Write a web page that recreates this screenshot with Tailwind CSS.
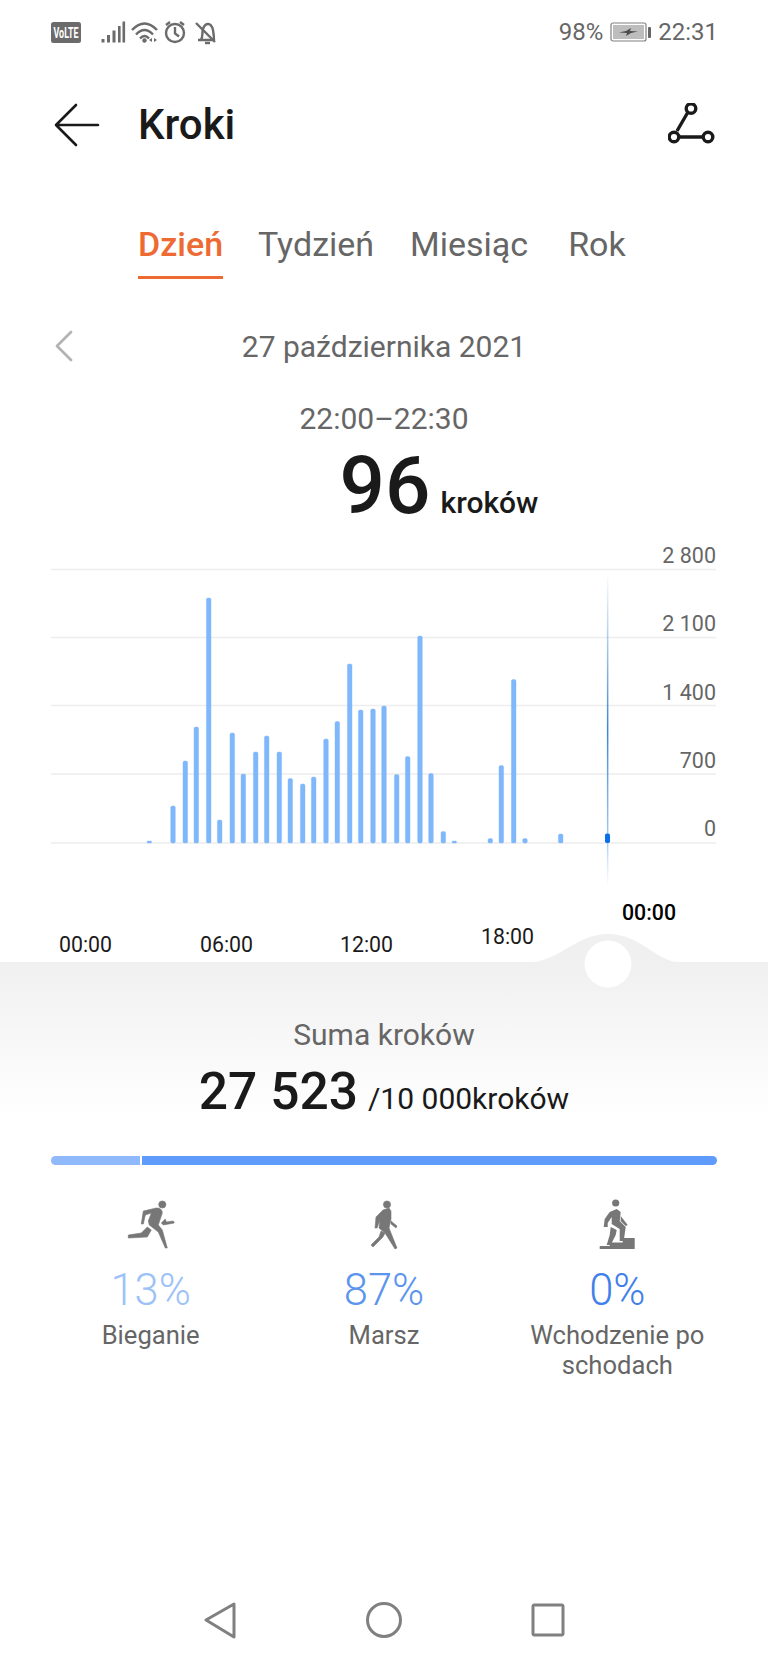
<!DOCTYPE html>
<html lang="pl">
<head>
<meta charset="utf-8">
<script src="https://cdn.jsdelivr.net/npm/@tailwindcss/browser@4"></script>
<title>Kroki</title>
</head>
<body class="bg-white">
<div class="w-[768px] h-[1664px] overflow-hidden bg-white flex flex-col font-['Roboto',sans-serif] text-[#1a1a1a]">

  <!-- status bar -->
  <div class="h-[64px] shrink-0 pl-[50px] pr-[50px] flex items-center justify-between text-[#666666] text-[24px]">
    <div class="flex items-center">
      <svg width="168" height="26" viewBox="50 19 168 26" class="block">
        <rect x="51" y="22" width="30" height="21" rx="2.500" fill="#6b6b6b"/>
        <text x="53.500" y="37.500" font-size="14" font-weight="700" fill="#fff" textLength="25" lengthAdjust="spacingAndGlyphs">VoLTE</text>
        <g fill="#6b6b6b">
          <rect x="101.500" y="39" width="3" height="3.500"/><rect x="107" y="35" width="3" height="7.500"/><rect x="112.500" y="30.500" width="3" height="12"/><rect x="118" y="26" width="2.600" height="16.500"/><rect x="122.500" y="21.500" width="2.600" height="21"/>
        </g>
        <g fill="none" stroke="#6b6b6b" stroke-width="2.400">
          <path d="M132 30 Q144.500 17 157 30"/><path d="M136 34.500 Q144.500 25.500 153 34.500"/><path d="M140 38.500 Q144.500 33.500 149 38.500"/>
          <circle cx="175" cy="33" r="9"/><path d="M175 27v6.500l4 3"/><path d="M166 25l4-3M184 25l-4-3"/>
          <path d="M198 40h16M201 40c2-3 1-8 2-11 1-3 3-5 5-5s4 2 5 6c.5 3 1 7 1 10"/><path d="M196 23l19 19"/><path d="M205 43h5"/>
        </g>
        <circle cx="144.500" cy="40.500" r="2.200" fill="#6b6b6b"/>
        <path d="M149 40l3-2v4zM157 40l-3-2v4z" fill="#6b6b6b"/>
      </svg>
    </div>
    <div class="flex items-center gap-[7px]">
      <span>98%</span>
      <svg width="41" height="22" viewBox="0 0 41 22" class="block">
        <rect x="1" y="2" width="35" height="18" rx="2" fill="#fff" stroke="#808080" stroke-width="1.200"/>
        <rect x="3" y="4" width="31" height="14" fill="#bdbdbd"/>
        <rect x="38" y="6" width="3" height="11" rx="1" fill="#666"/>
        <path d="M9 11.500l7-1.500 5-3-1 3 8 .5-7 1.500-5 3 1-3z" fill="#4d4d4d"/>
      </svg>
      <span>22:31</span>
    </div>
  </div>

  <!-- header -->
  <div class="h-[122px] shrink-0 pl-[54px] pr-[52px] flex items-center justify-between">
    <div class="flex items-center gap-[38px]">
      <svg width="46" height="44" viewBox="0 0 46 44" class="block" fill="none" stroke="#1a1a1a" stroke-width="2.600" stroke-linecap="round" stroke-linejoin="round">
        <path d="M44 22H2M22 2L2 22l20 20"/>
      </svg>
      <h1 class="text-[42px] leading-none font-medium">Kroki</h1>
    </div>
    <svg width="48" height="44" viewBox="0 0 48 44" class="block" fill="none" stroke="#1a1a1a" stroke-width="3.400">
      <path d="M20 9L9 28M11 34h24"/>
      <circle cx="23" cy="5.500" r="4.800"/><circle cx="6" cy="34" r="4.800"/><circle cx="40" cy="34" r="4.800"/>
    </svg>
  </div>

  <!-- tabs -->
  <div class="h-[93px] shrink-0 pl-[138px] pt-[38px] flex items-start text-[34px] leading-[40px] text-[#666666]">
    <div class="w-[85px] h-[55px] border-b-[3px] border-[#ed6b33] text-[#ed6b33] font-medium whitespace-nowrap">Dzień</div>
    <div class="ml-[35px]">Tydzień</div>
    <div class="ml-[36px]">Miesiąc</div>
    <div class="ml-[40px]">Rok</div>
  </div>

  <!-- date -->
  <div class="mt-[39px] h-[56px] shrink-0 relative flex items-center justify-center text-[30px] text-[#666666]">
    <svg width="20" height="32" viewBox="0 0 20 32" class="absolute left-[54px] top-[12px]" fill="none" stroke="#b3b3b3" stroke-width="2.800" stroke-linecap="round" stroke-linejoin="round"><path d="M17 2L3 16l14 14"/></svg>
    <span>27 października 2021</span>
  </div>

  <div class="mt-[16px] h-[44px] shrink-0 pt-[12px] flex items-center justify-center text-[30px] text-[#666666]">22:00–22:30</div>
  <div class="mt-[20px] h-[64px] shrink-0 pl-[110px] flex items-baseline justify-center">
    <span class="text-[80px] leading-[64px] font-medium">96</span>
    <span class="ml-[10px] text-[30px] font-medium">kroków</span>
  </div>

  <!-- chart -->
  <svg width="768" height="423" viewBox="0 539 768 423" class="mt-[21px] block overflow-visible relative z-10 shrink-0">
    <defs>
      <linearGradient id="mark" gradientUnits="userSpaceOnUse" x1="0" y1="572" x2="0" y2="888">
        <stop offset="0" stop-color="#3b85d0" stop-opacity="0"/>
        <stop offset=".5" stop-color="#3b85d0"/>
        <stop offset=".85" stop-color="#8cbcf0" stop-opacity=".8"/>
        <stop offset="1" stop-color="#b8d6f5" stop-opacity="0"/>
      </linearGradient>
    </defs>
    <g stroke="#ededed" stroke-width="1.300">
      <path d="M51 569.500H716M51 637.500H716M51 705.500H716M51 774H716M51 843H716"/>
    </g>
    <g fill="#666666" font-size="21.500" text-anchor="end">
      <text x="716" y="563">2 800</text>
      <text x="716" y="631">2 100</text>
      <text x="716" y="700">1 400</text>
      <text x="716" y="768">700</text>
      <text x="716" y="836">0</text>
    </g>
    <g fill="#7fb7fb" stroke="#7fb7fb" stroke-width=".4">
      <rect x="147" y="841" width="4.600" height="2" rx="1"/>
      <rect x="170.700" y="806" width="4.600" height="37" rx="1.500"/>
      <rect x="183" y="761" width="4.600" height="82" rx="1.500"/>
      <rect x="194" y="727" width="4.600" height="116" rx="1.500"/>
      <rect x="206.400" y="598" width="4.600" height="245" rx="1.500"/>
      <rect x="217.400" y="820" width="4.600" height="23" rx="1.500"/>
      <rect x="230" y="733" width="4.600" height="110" rx="1.500"/>
      <rect x="241" y="774" width="4.600" height="69" rx="1.500"/>
      <rect x="253.400" y="752" width="4.600" height="91" rx="1.500"/>
      <rect x="264.400" y="736" width="4.600" height="107" rx="1.500"/>
      <rect x="277" y="752" width="4.600" height="91" rx="1.500"/>
      <rect x="288" y="778.500" width="4.600" height="64.500" rx="1.500"/>
      <rect x="300.400" y="784" width="4.600" height="59" rx="1.500"/>
      <rect x="311.400" y="777" width="4.600" height="66" rx="1.500"/>
      <rect x="323.700" y="739" width="4.600" height="104" rx="1.500"/>
      <rect x="335" y="721.500" width="4.600" height="121.500" rx="1.500"/>
      <rect x="347.400" y="664" width="4.600" height="179" rx="1.500"/>
      <rect x="358.400" y="710" width="4.600" height="133" rx="1.500"/>
      <rect x="370.700" y="709" width="4.600" height="134" rx="1.500"/>
      <rect x="381.700" y="706" width="4.600" height="137" rx="1.500"/>
      <rect x="394.400" y="774.500" width="4.600" height="68.500" rx="1.500"/>
      <rect x="405.400" y="756.500" width="4.600" height="86.500" rx="1.500"/>
      <rect x="417.700" y="636" width="4.600" height="207" rx="1.500"/>
      <rect x="428.700" y="773.500" width="4.600" height="69.500" rx="1.500"/>
      <rect x="441" y="831.500" width="4.600" height="11.500" rx="1.500"/>
      <rect x="452" y="841" width="4.600" height="2" rx="1"/>
      <rect x="488" y="838.500" width="4.600" height="4.500" rx="1.500"/>
      <rect x="499" y="765.500" width="4.600" height="77.500" rx="1.500"/>
      <rect x="511.400" y="679.500" width="4.600" height="163.500" rx="1.500"/>
      <rect x="522.700" y="838.500" width="4.600" height="4.500" rx="1.500"/>
      <rect x="558.400" y="834" width="4.600" height="9" rx="1.500"/>
    </g>
    <rect x="606.900" y="572" width="1.500" height="316" fill="url(#mark)"/>
    <rect x="605" y="833.500" width="5" height="9.500" rx="1.800" fill="#0a6fe8"/>
    <g fill="#1a1a1a" font-size="21.300">
      <text x="59" y="952">00:00</text>
      <text x="200" y="952">06:00</text>
      <text x="340" y="952">12:00</text>
      <text x="481" y="944">18:00</text>
      <text x="622" y="919.500" font-weight="500" fill="#000">00:00</text>
    </g>
    <path d="M527 962.500C560 962 575 934 608 934S656 962 681 962.500Z" fill="#f0f0f0"/>
    <circle cx="608" cy="964" r="23.500" fill="#fff"/>
  </svg>

  <!-- summary -->
  <div class="h-[194px] shrink-0 bg-gradient-to-b from-[#f0f0f0] to-white to-[82%] flex flex-col items-center pt-[53px]">
    <div class="text-[30px] leading-[40px] text-[#666666]">Suma kroków</div>
    <div class="mt-[7px] flex items-baseline leading-[60px]">
      <span class="text-[51.500px] font-medium">27 523</span>
      <span class="ml-[10px] text-[30px]">/10 000kroków</span>
    </div>
  </div>

  <!-- progress -->
  <div class="mx-[51px] h-[9px] flex gap-[2px] shrink-0">
    <div class="w-[89px] rounded-l-full bg-[#8fb9fb]"></div>
    <div class="flex-1 rounded-r-full bg-[#5e9bfb]"></div>
  </div>

  <!-- activities -->
  <div class="mt-[30px] px-[34px] grid grid-cols-3 text-center">
    <div class="flex flex-col items-center">
      <svg width="60" height="60" viewBox="0.7 0 60 60" class="block" fill="#777777" stroke="#777777" stroke-width=".6">
        <circle cx="42" cy="9.500" r="3.600"/>
        <path d="M23 16L36 13Q42 13 42 18L38 30 42 35 47 53H45L38 37 29 30 28 26 31 18 25 20 23 29H21Z"/>
        <path d="M27 32L31 35 27 42 8 43V40L21 38Z"/>
        <path d="M45 24L46 27 53 26 54 28 43 30 41 28Z"/>
      </svg>
      <div class="mt-[11px] text-[43.500px] leading-[50px] font-light text-[#9cc2f8]">13%</div>
      <div class="mt-[4px] text-[25.600px] leading-[30px] text-[#666666]">Bieganie</div>
    </div>
    <div class="flex flex-col items-center">
      <svg width="60" height="60" viewBox="-1 0 60 60" class="block" fill="#777777" stroke="#777777" stroke-width=".6">
        <circle cx="32" cy="9.500" r="3.600"/>
        <path d="M28 15L34 13 36 16V24L34 33 42 53 40 54 30 38 24 33 25 25 22 33H20L21 22Z"/>
        <path d="M26 36L30 38 28 42 18 52 16 50 24 42Z"/>
        <path d="M36 26L42 31 41 33 36 29Z"/>
      </svg>
      <div class="mt-[11px] text-[43.500px] leading-[50px] font-light text-[#5c95ee]">87%</div>
      <div class="mt-[4px] text-[25.600px] leading-[30px] text-[#666666]">Marsz</div>
    </div>
    <div class="flex flex-col items-center">
      <svg width="60" height="60" viewBox="-2.7 0 60 60" class="block" fill="#777777">
        <circle cx="26" cy="8" r="3.600"/>
        <path d="M20 17L27 14 31 17 30 26 36 32 34 46H30L30 34 22 29V22L18 28V32H14L15 24Z"/>
        <path d="M31 21L38 30 36 31 31 26Z"/>
        <path d="M21 32L27 35 26 40 21 50H17L20 40Z"/>
        <path d="M10 54V51H20V47.500H33V43H45V54Z"/>
      </svg>
      <div class="mt-[11px] text-[43.500px] leading-[50px] font-light text-[#3f80ea]">0%</div>
      <div class="mt-[4px] text-[25.600px] leading-[30px] text-[#666666]">Wchodzenie po<br>schodach</div>
    </div>
  </div>

  <!-- nav -->
  <div class="mt-auto mb-[25px] flex items-center justify-center gap-[128px]">
    <svg width="34" height="38" viewBox="0 0 34 38" class="block" fill="none" stroke="#808080" stroke-width="3" stroke-linejoin="round"><path d="M31 3L3 19l28 17z"/></svg>
    <svg width="38" height="38" viewBox="0 0 38 38" class="block" fill="none" stroke="#808080" stroke-width="3"><circle cx="19" cy="19" r="16.500"/></svg>
    <svg width="34" height="34" viewBox="0 0 34 34" class="block" fill="none" stroke="#808080" stroke-width="3" stroke-linejoin="round"><rect x="2" y="2" width="30" height="30" rx="1.500"/></svg>
  </div>
</div>
</body>
</html>
